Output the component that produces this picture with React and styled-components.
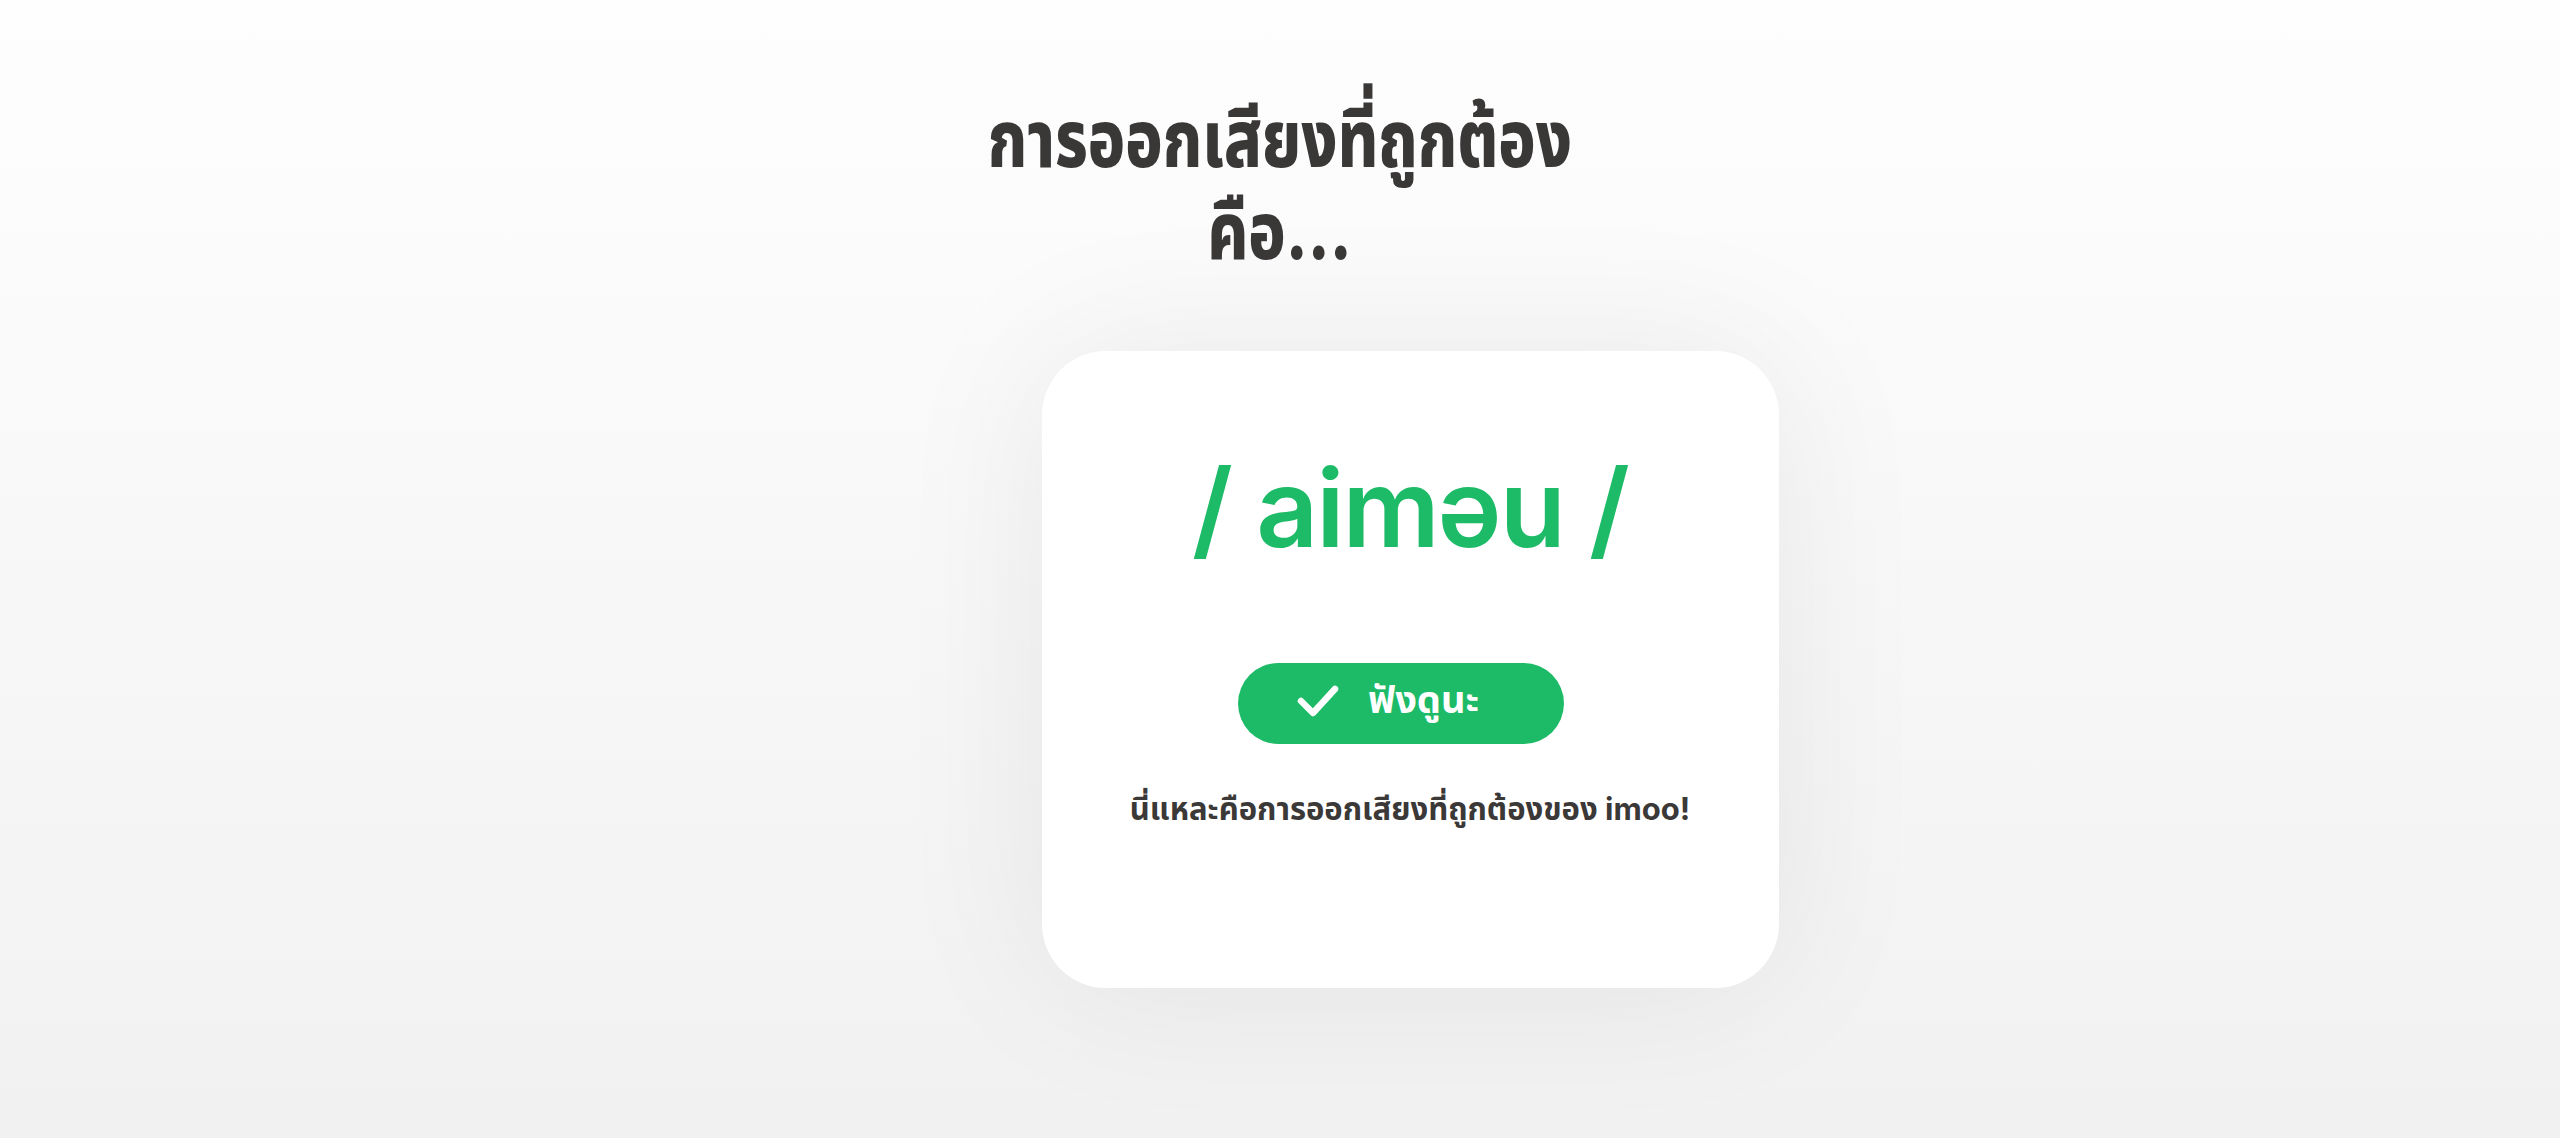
import React from "react";
import styled, { createGlobalStyle } from "styled-components";

const GlobalStyle = createGlobalStyle`
  html, body {
    margin: 0;
    padding: 0;
  }
  body {
    font-family: "Inter", "Noto Sans Thai", "Noto Sans", sans-serif;
  }
`;

const Page = styled.div`
  min-height: 100vh;
  background: linear-gradient(180deg, #fefefe 0%, #f1f1f1 100%);
  display: flex;
  flex-direction: column;
  align-items: center;
  box-sizing: border-box;
  padding-top: 92px;
`;

const Title = styled.h1`
  margin: 0;
  font-size: 80px;
  line-height: 92px;
  font-weight: 800;
  color: #3a3737;
  text-align: center;
  transform: scaleX(0.78);
`;

// card sits right of the page centre, as in the reference
const Stage = styled.div`
  display: flex;
  justify-content: center;
  margin-top: 75px;
`;

const Spacer = styled.div`
  width: 260px;
`;

const Card = styled.section`
  width: 737px;
  height: 637px;
  box-sizing: border-box;
  background: #ffffff;
  border-radius: 64px;
  box-shadow: 0 0 160px rgba(0, 0, 0, 0.07);
  display: flex;
  flex-direction: column;
  align-items: center;
  padding-top: 92px;
`;

const Phonetic = styled.div`
  font-family: "Inter", sans-serif;
  font-size: 108px;
  line-height: 130px;
  font-weight: 600;
  color: #1dbb67;
  letter-spacing: -2px;
`;

const ListenButton = styled.button`
  margin: 90px 19px 0 0;
  width: 326px;
  height: 81px;
  border: none;
  border-radius: 41px;
  background: #1dbb67;
  color: #ffffff;
  display: flex;
  align-items: center;
  justify-content: center;
  gap: 28px;
  font-family: inherit;
  font-size: 38px;
  font-weight: 700;
  cursor: pointer;
  padding: 0 26px 4px 0;
`;

const Caption = styled.p`
  margin: 43px 0 0;
  font-size: 31px;
  font-weight: 700;
  color: #3b3838;
`;

const Check = () => (
  <svg width="44" height="36" viewBox="0 0 44 36" fill="none">
    <path
      d="M5 17 L17 29 L39 5"
      stroke="#ffffff"
      strokeWidth="6.5"
      strokeLinecap="round"
      strokeLinejoin="round"
    />
  </svg>
);

export default function App() {
  return (
    <>
      <GlobalStyle />
      <Page>
        <Title>
          การออกเสียงที่ถูกต้อง
          <br />
          คือ...
        </Title>
        <Stage>
          <Spacer />
          <Card>
            <Phonetic>/ aiməu /</Phonetic>
            <ListenButton>
              <Check />
              ฟังดูนะ
            </ListenButton>
            <Caption>นี่แหละคือการออกเสียงที่ถูกต้องของ imoo!</Caption>
          </Card>
        </Stage>
      </Page>
    </>
  );
}
